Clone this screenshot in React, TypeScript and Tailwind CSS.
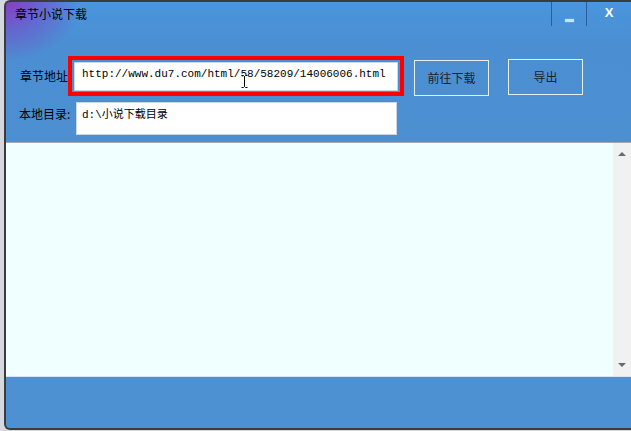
const cjk = "font-['Microsoft_YaHei','Noto_Sans_CJK_SC',sans-serif]";
const mono = "font-['Liberation_Mono','Noto_Sans_CJK_SC',monospace]";

function TitleBar() {
  return (
    <div className="flex h-[24px] items-center">
      <span className={`${cjk} flex-1 pl-[9px] text-[12px] leading-none text-black`}>章节小说下载</span>
      <div className="flex h-full">
        <div className="flex w-[35px] items-center justify-center border-l border-[#2a5f9c]">
          <div className="mt-[12px] h-[3px] w-[9px] bg-[#cfe1f6] shadow-[0_0_1px_#ffffff]" />
        </div>
        <div className="flex w-[45px] items-center justify-center border-l border-[#2a5f9c] pb-[3px]">
          <span className="font-['Liberation_Sans',sans-serif] text-[13px] font-bold leading-none text-white">X</span>
        </div>
      </div>
    </div>
  );
}

function IBeam() {
  return (
    <svg className="absolute left-[166px] top-[12px]" width="7" height="13" viewBox="0 0 7 13">
      <path d="M0.5 0.5h2l1 1 1-1h2M3.5 1.5v10M0.5 12.5h2l1-1 1 1h2" stroke="#ffffff" strokeWidth="2" fill="none" />
      <path d="M0.5 0.5h2l1 1 1-1h2M3.5 1.5v10M0.5 12.5h2l1-1 1 1h2" stroke="#000000" strokeWidth="1" fill="none" />
    </svg>
  );
}

function Button({ label, className }: { label: string; className: string }) {
  return (
    <div
      className={`${cjk} flex h-[36px] w-[75px] items-center justify-center border border-[#e4effa] text-[12px] text-[#111]/90 ${className}`}
    >
      {label}
    </div>
  );
}

export default function App() {
  return (
    <div className="h-[431px] w-[631px] overflow-hidden bg-[#d4d9df]">
      <div className="ml-[4px] flex h-[430px] flex-col rounded-tl-[6px] rounded-bl-[6px] border-t-2 border-b-2 border-l-2 border-[#3c3c3c] bg-[image:radial-gradient(ellipse_75px_60px_at_0%_0%,#8a3cc4_0%,rgba(120,70,200,0.6)_45%,rgba(78,145,211,0)_100%),linear-gradient(#4a95dd,#4b8fd2_40px,#4e91d3)]">
        <TitleBar />

        <div className="mt-[30px] flex h-[40px] items-start">
          <div className={`${cjk} flex h-full w-[62px] items-center pl-[14px] text-[12px] text-black`}>章节地址</div>
          <div className="flex h-[40px] w-[336px] border-4 border-[#ff0000] pt-[2px] pl-[2px]">
            <div className={`${mono} relative h-[29px] w-[324px] border border-[#c9d6e4] bg-white pt-[3px] pl-[7px] text-[11px] text-black`}>
              http://www.du7.com/html/58/58209/14006006.html
              <IBeam />
            </div>
          </div>
          <Button label="前往下载" className="mt-[4px] ml-[10px]" />
          <Button label="导出" className="mt-[3px] ml-[19px]" />
        </div>

        <div className="mt-[6px] flex h-[33px] items-start">
          <div className={`${cjk} w-[70px] pt-[3px] pl-[13px] text-[12px] text-black`}>本地目录:</div>
          <div className={`${mono} h-[33px] w-[321px] border border-[#c9d6e4] bg-white pt-[4px] pl-[5px] text-[11px] text-black`}>
            d:\小说下载目录
          </div>
        </div>

        <div className="mt-[7px] flex h-[235px] border-t border-b border-t-[#a4a9ae] border-b-[#d6e8f6] bg-[#f0ffff]">
          <div className="flex-1" />
          <div className="flex w-[18px] flex-col items-center justify-between bg-[#f1f1f1] py-[9px]">
            <div className="h-0 w-0 border-x-[4px] border-b-[4px] border-x-transparent border-b-[#6a6a6a]" />
            <div className="h-0 w-0 border-x-[4px] border-t-[4px] border-x-transparent border-t-[#6a6a6a]" />
          </div>
        </div>

        <div className="flex-1" />
      </div>
    </div>
  );
}
